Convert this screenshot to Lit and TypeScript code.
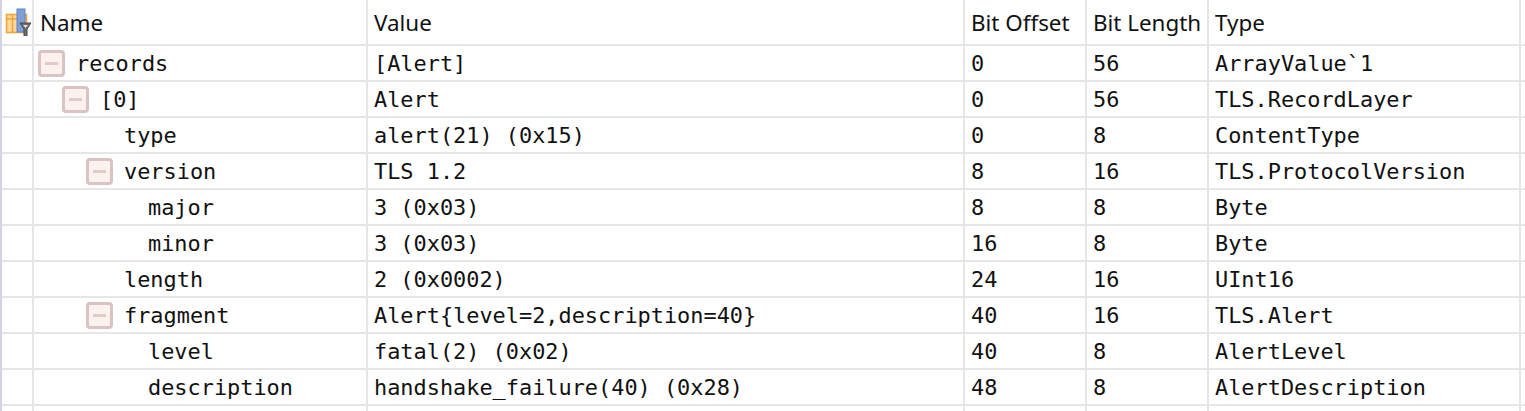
import { LitElement, html, css, svg } from "lit";
import { customElement } from "lit/decorators.js";

type Row = { d: number; exp: boolean; n: string; v: string; o: string; l: string; t: string };
const rows: Row[] = [
  { d: 0, exp: true, n: "records", v: "[Alert]", o: "0", l: "56", t: "ArrayValue`1" },
  { d: 1, exp: true, n: "[0]", v: "Alert", o: "0", l: "56", t: "TLS.RecordLayer" },
  { d: 2, exp: false, n: "type", v: "alert(21) (0x15)", o: "0", l: "8", t: "ContentType" },
  { d: 2, exp: true, n: "version", v: "TLS 1.2", o: "8", l: "16", t: "TLS.ProtocolVersion" },
  { d: 3, exp: false, n: "major", v: "3 (0x03)", o: "8", l: "8", t: "Byte" },
  { d: 3, exp: false, n: "minor", v: "3 (0x03)", o: "16", l: "8", t: "Byte" },
  { d: 2, exp: false, n: "length", v: "2 (0x0002)", o: "24", l: "16", t: "UInt16" },
  { d: 2, exp: true, n: "fragment", v: "Alert{level=2,description=40}", o: "40", l: "16", t: "TLS.Alert" },
  { d: 3, exp: false, n: "level", v: "fatal(2) (0x02)", o: "40", l: "8", t: "AlertLevel" },
  { d: 3, exp: false, n: "description", v: "handshake_failure(40) (0x28)", o: "48", l: "8", t: "AlertDescription" },
];

@customElement("app-root")
export class AppRoot extends LitElement {
  static styles = css`
    :host { display: block; width: 1525px; height: 411px; overflow: hidden; background: #fff; color: #111; }
    .grid { border-left: 2px solid #d3d3e6; height: 411px; box-sizing: border-box; }
    .row { display: grid; grid-template-columns: 32px 334px 597px 122px 122px 312px 1fr; height: 36px; box-sizing: border-box; border-bottom: 2px solid #e6e6e9; align-items: stretch; }
    .head { height: 46px; }
    .cell { border-right: 2px solid #e6e6e9; display: flex; align-items: center; padding-left: 6px; white-space: nowrap; overflow: hidden; font-family: "DejaVu Sans Mono", monospace; font-size: 21.9px; }
    .head .cell { font-family: "Noto Sans", sans-serif; font-size: 22.4px; padding-top: 1px; }
    .cell.g { padding: 0; }
    .cell.e { border-right: none; }
    .ico { margin: 0 0 0 2px; display: block; flex: none; }
    .tog { width: 27px; height: 27px; box-sizing: border-box; border: 3px solid #dcc3c3; border-radius: 4px; background: #fbf1ef; display: flex; align-items: center; justify-content: center; flex: none; }
    .tog::after { content: ""; width: 13px; height: 3px; background: #e0cbc8; }
    .spc { width: 27px; flex: none; }
    .lbl { margin-left: 11px; }
    .tail { height: 6px; display: grid; grid-template-columns: 32px 334px 597px 122px 122px 312px; }
    .tail div { border-right: 2px solid #e6e6e9; }
  `;

  private icon() {
    return svg`<svg class="ico" width="27" height="28" viewBox="0 0 27 28">
      <rect x="2.500" y="6.500" width="20" height="18" fill="#fbd79a" stroke="#eea53c" stroke-width="1.600"/>
      <path d="M2.500 11h20M8.500 6.500v18M14 6.500v18" stroke="#eea53c" stroke-width="1.600" fill="none"/>
      <rect x="13" y="1" width="8" height="23" fill="#7f9fd8" stroke="#5b83c8" stroke-width="1"/>
      <path d="M16 15h11l-4 6v7h-3v-7z" fill="#6e6e6e" stroke="#4a4a4a" stroke-width="1"/>
      <path d="M19 17h5l-2 2.500h-1z" fill="#e2e2e2"/>
    </svg>`;
  }

  render() {
    return html`<div class="grid">
      <div class="row head">
        <div class="cell g">${this.icon()}</div>
        <div class="cell">Name</div>
        <div class="cell">Value</div>
        <div class="cell">Bit Offset</div>
        <div class="cell">Bit Length</div>
        <div class="cell">Type</div>
        <div class="cell e"></div>
      </div>
      ${rows.map(
        (r) => html`<div class="row">
          <div class="cell g"></div>
          <div class="cell" style="padding-left:${4 + r.d * 24}px">
            ${r.exp ? html`<span class="tog"></span>` : html`<span class="spc"></span>`}
            <span class="lbl">${r.n}</span>
          </div>
          <div class="cell">${r.v}</div>
          <div class="cell">${r.o}</div>
          <div class="cell">${r.l}</div>
          <div class="cell">${r.t}</div>
          <div class="cell e"></div>
        </div>`
      )}
      <div class="tail"><div></div><div></div><div></div><div></div><div></div><div></div></div>
    </div>`;
  }
}
